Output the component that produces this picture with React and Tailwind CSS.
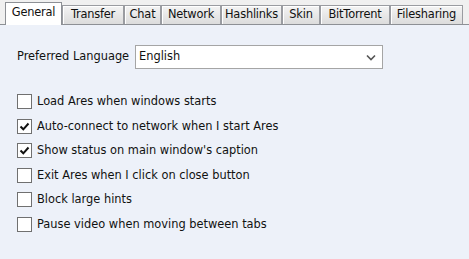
import React from "react";

const tabs = [
  { name: "General", w: 57, active: true },
  { name: "Transfer", w: 62 },
  { name: "Chat", w: 37 },
  { name: "Network", w: 60 },
  { name: "Hashlinks", w: 61 },
  { name: "Skin", w: 38 },
  { name: "BitTorrent", w: 70 },
  { name: "Filesharing", w: 73 },
];

const options = [
  { label: "Load Ares when windows starts", checked: false },
  { label: "Auto-connect to network when I start Ares", checked: true },
  { label: "Show status on main window's caption", checked: true },
  { label: "Exit Ares when I click on close button", checked: false },
  { label: "Block large hints", checked: false },
  { label: "Pause video when moving between tabs", checked: false },
];

function Check({ checked }) {
  return (
    <div className="w-[15px] h-[15px] border border-[#707070] bg-white flex items-center justify-center shrink-0">
      {checked && (
        <svg width="11" height="11" viewBox="0 0 11 11">
          <path d="M1.5 5.5 L4.3 8.3 L9.5 2.5" fill="none" stroke="#111" strokeWidth="2" />
        </svg>
      )}
    </div>
  );
}

export default function App() {
  return (
    <div
      className="w-[469px] h-[259px] bg-[#edf1f9] text-[11.4px] text-[#111] overflow-hidden"
      style={{ fontFamily: "'DejaVu Sans', sans-serif" }}
    >
      <div className="h-[25px] bg-[#f0f0f0] border-b border-[#8d9095] flex items-end pl-[5px]">
        {tabs.map((t) =>
          t.active ? (
            <div
              key={t.name}
              className="h-[23px] -mb-px bg-white border border-b-0 border-[#8d9095] flex items-center justify-center pb-[2px] tracking-[-0.2px]"
              style={{ width: t.w }}
            >
              {t.name}
            </div>
          ) : (
            <div
              key={t.name}
              className="h-[19px] bg-gradient-to-b from-[#f4f4f4] to-[#dcdcdc] border border-b-0 border-[#9a9ca1] shadow-[inset_1px_1px_0_#ffffff] flex items-center justify-center tracking-[-0.2px]"
              style={{ width: t.w }}
            >
              {t.name}
            </div>
          )
        )}
      </div>
      <div className="pl-[17px] pt-[20px]">
        <div className="flex items-center h-[24px]">
          <span className="w-[118px]">Preferred Language</span>
          <div className="w-[248px] h-[24px] bg-white border border-[#a5a5a5] flex items-center justify-between pl-[3px] pr-[6px]">
            <span>English</span>
            <svg width="10" height="7" viewBox="0 0 10 7">
              <path d="M1 1.5 L5 5.5 L9 1.5" fill="none" stroke="#555" strokeWidth="1.6" />
            </svg>
          </div>
        </div>
        <div className="mt-[25px] flex flex-col gap-[9.6px]">
          {options.map((o) => (
            <div key={o.label} className="flex items-center h-[15px] gap-[5px]">
              <Check checked={o.checked} />
              <span>{o.label}</span>
            </div>
          ))}
        </div>
      </div>
    </div>
  );
}
